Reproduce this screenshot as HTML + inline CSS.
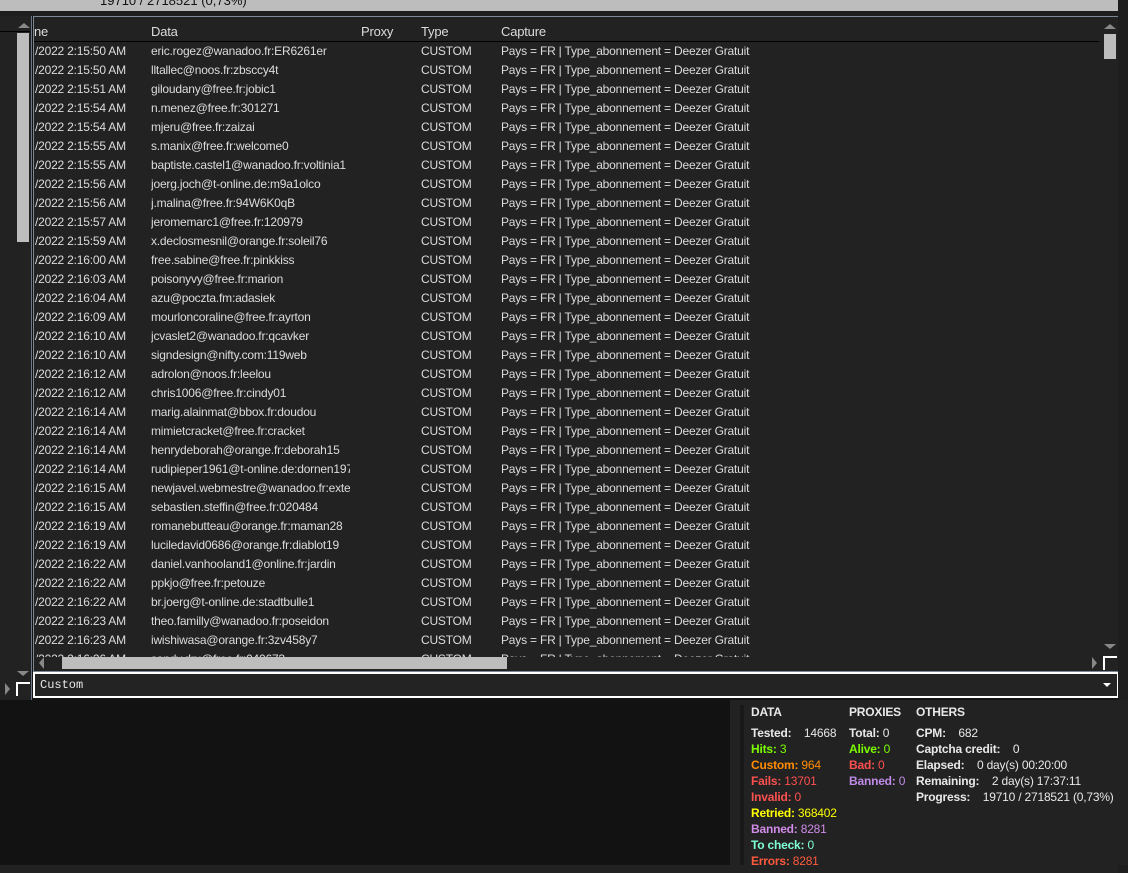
<!DOCTYPE html>
<html><head><meta charset="utf-8"><style>
*{margin:0;padding:0;box-sizing:border-box}
body{width:1128px;height:873px;background:#121212;position:relative;overflow:hidden;font-family:"Liberation Sans",sans-serif;font-size:12px;color:#dcdcdc}
.a{position:absolute}
.row{position:absolute;left:0;height:19px;width:1070px;white-space:nowrap;letter-spacing:-0.2px}
.row span{position:absolute;top:1px;line-height:19px}
.c1{left:1px}.c2{left:117px;width:199px;overflow:hidden}.c4{left:387px}.c5{left:467px}
.st{position:absolute;font-size:12px;line-height:16px;font-weight:bold;white-space:nowrap;letter-spacing:-0.2px}
.st b{font-weight:normal}
</style></head><body>
<div class="a" style="left:0;top:0;width:1118px;height:11px;background:#bdbdbd;overflow:hidden"><div class="a" style="left:100px;top:-7px;color:#111;font-size:13px">19710 / 2718521 (0,73%)</div></div>
<div class="a" style="left:0;top:11px;width:1118px;height:5px;background:#1e1e1e"></div>
<div class="a" style="left:0;top:16px;width:32px;height:684px;background:#222;border-right:1px solid #6c7787"></div>
<div class="a" style="left:0;top:31px;width:30px;height:1px;background:#000"></div>
<div class="a" style="left:18px;top:23px;width:0;height:0;border-left:6px solid transparent;border-right:6px solid transparent;border-bottom:5px solid #888"></div>
<div class="a" style="left:17px;top:33px;width:12px;height:209px;background:#bdbdbd"></div>
<div class="a" style="left:17px;top:671px;width:0;height:0;border-left:6px solid transparent;border-right:6px solid transparent;border-top:5px solid #888"></div>
<div class="a" style="left:5px;top:683px;width:0;height:0;border-top:6px solid transparent;border-bottom:6px solid transparent;border-left:5px solid #888"></div>
<div class="a" style="left:16px;top:682px;width:14px;height:14px;border-left:2px solid #fff;border-top:2px solid #fff"></div>
<div class="a" style="left:33px;top:16px;width:1086px;height:656px;background:#222;border:1px solid #7d8796;overflow:hidden">
 <div class="a" style="left:0;top:5px;width:1070px;height:19px;white-space:nowrap;font-size:13px;letter-spacing:-0.2px">
  <span class="a" style="left:0;line-height:19px">ne</span><span class="a" style="left:117px;line-height:19px">Data</span><span class="a" style="left:327px;line-height:19px">Proxy</span><span class="a" style="left:387px;line-height:19px">Type</span><span class="a" style="left:467px;line-height:19px">Capture</span>
 </div>
 <div class="a" style="left:0;top:24px;width:1065px;height:1px;background:#000"></div>
 <div class="a" id="rows" style="left:0;top:24px;width:1070px;height:616px;overflow:hidden"></div>
 <div class="a" style="left:1070px;top:7px;width:0;height:0;border-left:6px solid transparent;border-right:6px solid transparent;border-bottom:5px solid #888"></div>
 <div class="a" style="left:1070px;top:17px;width:12px;height:25px;background:#bdbdbd"></div>
 <div class="a" style="left:1070px;top:627px;width:0;height:0;border-left:6px solid transparent;border-right:6px solid transparent;border-top:5px solid #888"></div>
 <div class="a" style="left:5px;top:640px;width:0;height:0;border-top:6px solid transparent;border-bottom:6px solid transparent;border-right:5px solid #888"></div>
 <div class="a" style="left:28px;top:640px;width:445px;height:12px;background:#bdbdbd"></div>
 <div class="a" style="left:1058px;top:640px;width:0;height:0;border-top:6px solid transparent;border-bottom:6px solid transparent;border-left:5px solid #888"></div>
 <div class="a" style="left:1069px;top:639px;width:14px;height:14px;border-left:2px solid #fff;border-top:2px solid #fff"></div>
</div>
<div class="a" style="left:33px;top:672px;width:1086px;height:26px;background:#232323;border:2px solid #fff"></div>
<div class="a" style="left:40px;top:678px;font-family:'Liberation Mono',monospace;font-size:12px;color:#e8e8e8">Custom</div>
<div class="a" style="left:1103px;top:683px;width:0;height:0;border-left:4px solid transparent;border-right:4px solid transparent;border-top:4px solid #fff"></div>
<div class="a" style="left:0;top:865px;width:1128px;height:8px;background:#222"></div>
<div class="a" style="left:1118px;top:0;width:10px;height:873px;background:#1e1e1e"></div>
<div class="a" style="left:730px;top:700px;width:398px;height:165px;background:#222"></div>
<div class="a" style="left:740px;top:705px;width:4px;height:160px;background:#181818"></div>
<div class="st" style="left:751px;top:704px;color:#e8e8e8">DATA</div>
<div class="st" style="left:849px;top:704px;color:#e8e8e8">PROXIES</div>
<div class="st" style="left:916px;top:704px;color:#e8e8e8">OTHERS</div>
<div class="st" style="left:751px;top:725px;color:#e8e8e8">Tested: <b>&nbsp;&nbsp;&nbsp;14668</b></div>
<div class="st" style="left:751px;top:741px;color:#7cfc00">Hits: <b>3</b></div>
<div class="st" style="left:751px;top:757px;color:#ff8c00">Custom: <b>964</b></div>
<div class="st" style="left:751px;top:773px;color:#ff5050">Fails: <b>13701</b></div>
<div class="st" style="left:751px;top:789px;color:#ff5050">Invalid: <b>0</b></div>
<div class="st" style="left:751px;top:805px;color:#ffff00">Retried: <b>368402</b></div>
<div class="st" style="left:751px;top:821px;color:#d08be8">Banned: <b>8281</b></div>
<div class="st" style="left:751px;top:837px;color:#7fffd4">To check: <b>0</b></div>
<div class="st" style="left:751px;top:853px;color:#ff5a3c">Errors: <b>8281</b></div>
<div class="st" style="left:849px;top:725px;color:#e8e8e8">Total: <b>0</b></div>
<div class="st" style="left:849px;top:741px;color:#7cfc00">Alive: <b>0</b></div>
<div class="st" style="left:849px;top:757px;color:#ff5050">Bad: <b>0</b></div>
<div class="st" style="left:849px;top:773px;color:#c08be8">Banned: <b>0</b></div>
<div class="st" style="left:916px;top:725px;color:#e8e8e8">CPM: <b>&nbsp;&nbsp;&nbsp;682</b></div>
<div class="st" style="left:916px;top:741px;color:#e8e8e8">Captcha credit: <b>&nbsp;&nbsp;&nbsp;0</b></div>
<div class="st" style="left:916px;top:757px;color:#e8e8e8">Elapsed: <b>&nbsp;&nbsp;&nbsp;0 day(s) 00:20:00</b></div>
<div class="st" style="left:916px;top:773px;color:#e8e8e8">Remaining: <b>&nbsp;&nbsp;&nbsp;2 day(s) 17:37:11</b></div>
<div class="st" style="left:916px;top:789px;color:#e8e8e8">Progress: <b>&nbsp;&nbsp;&nbsp;19710 / 2718521 (0,73%)</b></div>
<script>
var d=[["2:15:50","eric.rogez@wanadoo.fr:ER6261er"],["2:15:50","lltallec@noos.fr:zbsccy4t"],["2:15:51","giloudany@free.fr:jobic1"],["2:15:54","n.menez@free.fr:301271"],["2:15:54","mjeru@free.fr:zaizai"],["2:15:55","s.manix@free.fr:welcome0"],["2:15:55","baptiste.castel1@wanadoo.fr:voltinia1"],["2:15:56","joerg.joch@t-online.de:m9a1olco"],["2:15:56","j.malina@free.fr:94W6K0qB"],["2:15:57","jeromemarc1@free.fr:120979"],["2:15:59","x.declosmesnil@orange.fr:soleil76"],["2:16:00","free.sabine@free.fr:pinkkiss"],["2:16:03","poisonyvy@free.fr:marion"],["2:16:04","azu@poczta.fm:adasiek"],["2:16:09","mourloncoraline@free.fr:ayrton"],["2:16:10","jcvaslet2@wanadoo.fr:qcavker"],["2:16:10","signdesign@nifty.com:119web"],["2:16:12","adrolon@noos.fr:leelou"],["2:16:12","chris1006@free.fr:cindy01"],["2:16:14","marig.alainmat@bbox.fr:doudou"],["2:16:14","mimietcracket@free.fr:cracket"],["2:16:14","henrydeborah@orange.fr:deborah15"],["2:16:14","rudipieper1961@t-online.de:dornen1974"],["2:16:15","newjavel.webmestre@wanadoo.fr:extended"],["2:16:15","sebastien.steffin@free.fr:020484"],["2:16:19","romanebutteau@orange.fr:maman28"],["2:16:19","luciledavid0686@orange.fr:diablot19"],["2:16:22","daniel.vanhooland1@online.fr:jardin"],["2:16:22","ppkjo@free.fr:petouze"],["2:16:22","br.joerg@t-online.de:stadtbulle1"],["2:16:23","theo.familly@wanadoo.fr:poseidon"],["2:16:23","iwishiwasa@orange.fr:3zv458y7"],["2:16:26","sandy.dru@free.fr:040673"]];
var h="";d.forEach(function(r,i){h+='<div class="row" style="top:'+(i*19)+'px"><span class="c1">/2022 '+r[0]+' AM</span><span class="c2">'+r[1]+'</span><span class="c4">CUSTOM</span><span class="c5">Pays = FR | Type_abonnement = Deezer Gratuit</span></div>';});
document.getElementById("rows").innerHTML=h;
</script>
</body></html>
